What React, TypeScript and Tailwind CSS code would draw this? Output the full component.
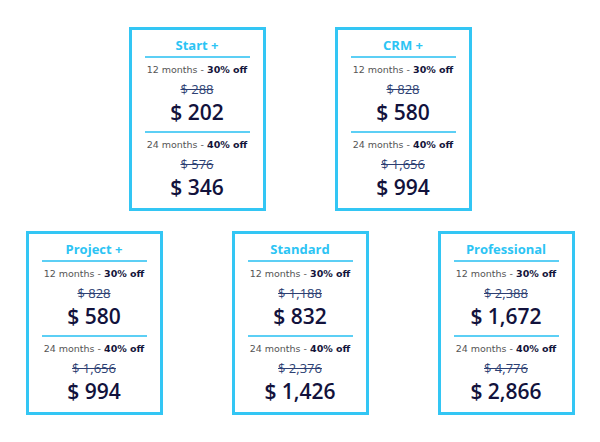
import React from "react";

type Plan = { name: string; s12: [string, string]; s24: [string, string] };

const plans: Plan[] = [
  { name: "Start +", s12: ["$ 288", "$ 202"], s24: ["$ 576", "$ 346"] },
  { name: "CRM +", s12: ["$ 828", "$ 580"], s24: ["$ 1,656", "$ 994"] },
  { name: "Project +", s12: ["$ 828", "$ 580"], s24: ["$ 1,656", "$ 994"] },
  { name: "Standard", s12: ["$ 1,188", "$ 832"], s24: ["$ 2,376", "$ 1,426"] },
  { name: "Professional", s12: ["$ 2,388", "$ 1,672"], s24: ["$ 4,776", "$ 2,866"] },
];

const os = { fontFamily: '"Open Sans", "Noto Sans", sans-serif' };

function Section({ months, off, prices }: { months: string; off: string; prices: [string, string] }) {
  return (
    <div className="flex flex-col items-center pb-[7px]">
      <div className="h-[2px] w-full bg-[#5ccff5]" />
      <div className="mt-[5px] h-[14px] leading-[14px] text-[9.5px] text-[#555555] whitespace-nowrap">
        {months} - <span className="font-bold text-[#14143a]">{off}</span>
      </div>
      <div className="mt-[4px] h-[16px] leading-[16px] text-[13px] text-[#2d3f73] line-through" style={os}>
        {prices[0]}
      </div>
      <div className="mt-[3px] h-[24px] leading-[24px] text-[21px] font-semibold text-[#12123c]" style={os}>
        {prices[1]}
      </div>
    </div>
  );
}

function Card({ p }: { p: Plan }) {
  return (
    <div className="w-[137px] h-[184px] border-[3px] border-[#33c6f4] bg-white px-[13px] flex flex-col">
      <div
        className="pt-[7px] h-[26px] leading-[16px] text-center text-[13px] font-bold text-[#2cc4f4] whitespace-nowrap"
        style={os}
      >
        {p.name}
      </div>
      <Section months="12 months" off="30% off" prices={p.s12} />
      <Section months="24 months" off="40% off" prices={p.s24} />
    </div>
  );
}

export default function App() {
  return (
    <div
      className="w-[600px] h-[442px] bg-white pt-[27px] flex flex-col gap-[20px]"
      style={{ fontFamily: '"DejaVu Sans", "Noto Sans", sans-serif' }}
    >
      <div className="flex justify-center gap-[69px]">
        <Card p={plans[0]} />
        <Card p={plans[1]} />
      </div>
      <div className="flex justify-center gap-[69px]">
        <Card p={plans[2]} />
        <Card p={plans[3]} />
        <Card p={plans[4]} />
      </div>
    </div>
  );
}
